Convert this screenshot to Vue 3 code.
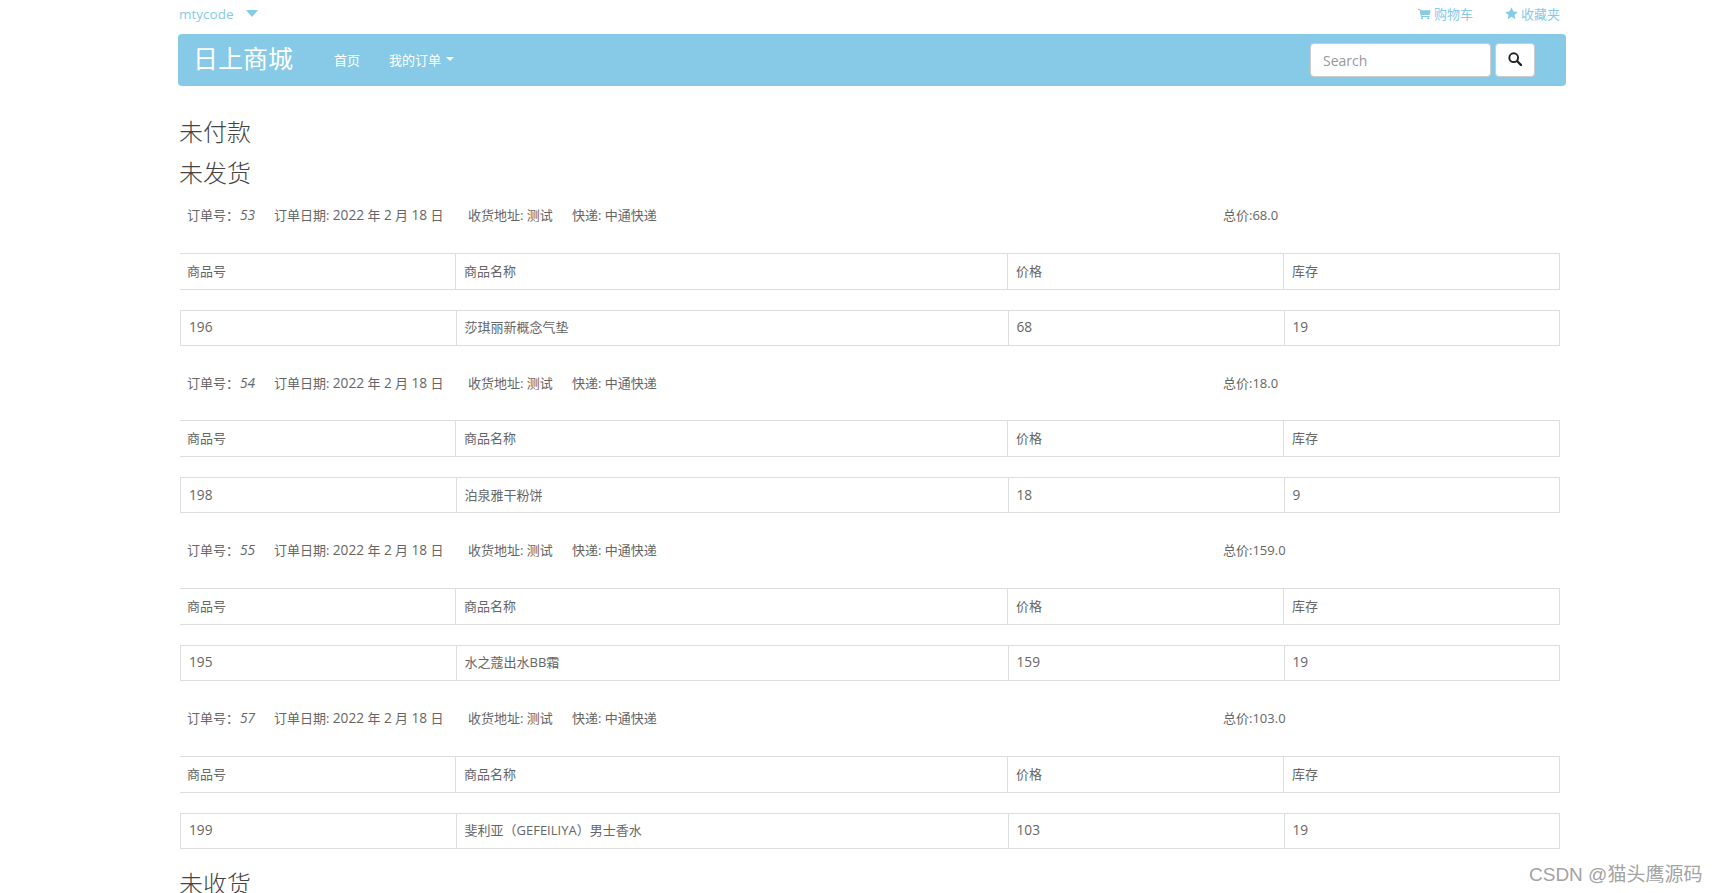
<script setup>
const orders = [
  { id: 53, total: '68.0', pid: 196, name: '莎琪丽新概念气垫', price: 68, stock: 19 },
  { id: 54, total: '18.0', pid: 198, name: '泊泉雅干粉饼', price: 18, stock: 9 },
  { id: 55, total: '159.0', pid: 195, name: '水之蔻出水BB霜', price: 159, stock: 19 },
  { id: 57, total: '103.0', pid: 199, name: '斐利亚（GEFEILIYA）男士香水', price: 103, stock: 19 },
]
</script>

<template>
  <div class="page">
    <div class="container">
      <div class="topbar">
        <a class="user">mtycode<i class="user-caret"></i></a>
        <div class="links">
          <a class="link">
            <svg class="ico cart" viewBox="0 0 14 12" aria-hidden="true">
              <path d="M0 0.6h2.4l.4 1.4H13.6l-1 5H3.9l.3 1.2H12.4v1H3.2L1.6 1.7H0z" />
              <circle cx="4.4" cy="10.7" r="1.2" />
              <circle cx="11" cy="10.7" r="1.2" />
            </svg>购物车
          </a>
          <a class="link">
            <svg class="ico star" viewBox="0 0 14 14" aria-hidden="true">
              <path d="M7 .4l2 4.4 4.8.5-3.6 3.2 1 4.7L7 10.4l-4.2 2.8 1-4.7L.2 5.3 5 4.8z" />
            </svg>收藏夹
          </a>
        </div>
      </div>

      <nav class="navbar">
        <a class="brand">日上商城</a>
        <a class="nav-item first">首页</a>
        <a class="nav-item second">我的订单<i class="nav-caret"></i></a>
        <form class="search" @submit.prevent>
          <input class="search-input" type="text" placeholder="Search" />
          <button class="search-btn" type="submit" aria-label="Search">
            <svg viewBox="0 0 16 16" width="14" height="14" aria-hidden="true">
              <circle cx="6.5" cy="6.5" r="5" fill="none" stroke="#222" stroke-width="2.2" />
              <path d="M10.3 10.3L15 15" stroke="#222" stroke-width="2.6" stroke-linecap="round" />
            </svg>
          </button>
        </form>
      </nav>

      <section class="content">
        <h3 class="heading">未付款</h3>
        <h3 class="heading">未发货</h3>

        <div class="orders">
          <div v-for="o in orders" :key="o.id" class="order">
            <div class="order-info">
              <span>订单号：<em class="num">{{ o.id }}</em></span>
              <span>订单日期: <b class="num">2022</b> 年 <b class="num">2</b> 月 <b class="num">18</b> 日</span>
              <span>收货地址: 测试</span>
              <span>快递: 中通快递</span>
              <span>总价:{{ o.total }}</span>
            </div>
            <table class="grid head">
              <tbody>
                <tr>
                  <td class="c1">商品号</td>
                  <td class="c2">商品名称</td>
                  <td class="c3">价格</td>
                  <td class="c4">库存</td>
                </tr>
              </tbody>
            </table>
            <table class="grid body">
              <tbody>
                <tr>
                  <td class="c1"><b class="num">{{ o.pid }}</b></td>
                  <td class="c2">{{ o.name }}</td>
                  <td class="c3"><b class="num">{{ o.price }}</b></td>
                  <td class="c4"><b class="num">{{ o.stock }}</b></td>
                </tr>
              </tbody>
            </table>
          </div>
        </div>

        <h3 class="heading last">未收货</h3>
      </section>
    </div>
    <div class="watermark">CSDN @猫头鹰源码</div>
  </div>
</template>

<style scoped>
.page {
  position: relative;
  height: 893px;
  overflow: hidden;
  background: #fff;
  font-family: "Open Sans", "Noto Sans CJK SC", sans-serif;
  font-size: 13px;
  color: #666;
}
.container {
  width: 1388px;
  margin-left: 178px;
}
.num {
  font-size: 13.7px;
  font-weight: 400;
  line-height: 1;
}
.topbar {
  height: 34px;
  padding: 0 6px 7px 2px;
  display: flex;
  align-items: center;
  justify-content: space-between;
  box-sizing: border-box;
  color: #87cae7;
}
.user {
  display: flex;
  align-items: center;
  font-size: 13.5px;
  margin-left: -1px;
}
.user-caret {
  width: 0;
  height: 0;
  margin-left: 12px;
  border-left: 6px solid transparent;
  border-right: 6px solid transparent;
  border-top: 7px solid #87cae7;
}
.links {
  display: flex;
  gap: 32px;
}
.link {
  display: flex;
  align-items: center;
}
.ico {
  fill: #87cae7;
  margin-right: 3px;
}
.cart {
  width: 13px;
  height: 12px;
}
.star {
  width: 13px;
  height: 13px;
}
.navbar {
  height: 52px;
  background: #87cae7;
  border-radius: 4px;
  display: flex;
  align-items: center;
  padding: 0 31px 0 15px;
  box-sizing: border-box;
  color: #fff;
}
.brand {
  font-size: 25px;
  line-height: 25px;
  width: 141px;
  padding-bottom: 4px;
  flex: none;
  box-sizing: border-box;
}
.nav-item {
  display: flex;
  align-items: center;
  flex: none;
  padding-bottom: 2px;
}
.first {
  width: 55px;
}
.nav-caret {
  width: 0;
  height: 0;
  margin-left: 5px;
  border-left: 4px solid transparent;
  border-right: 4px solid transparent;
  border-top: 4px solid #fff;
}
.search {
  margin-left: auto;
  display: flex;
  gap: 4px;
}
.search-input {
  width: 181px;
  height: 34px;
  box-sizing: border-box;
  padding: 0 12px;
  border: 1px solid #ccc;
  border-radius: 4px;
  background: #fff;
  font: 14px "Open Sans", sans-serif;
  color: #555;
  outline: none;
}
.search-input::placeholder {
  color: #999;
  opacity: 1;
}
.search-btn {
  width: 40px;
  height: 34px;
  padding: 0 0 3px;
  border: 1px solid #ccc;
  border-radius: 4px;
  background: #fff;
  display: flex;
  align-items: center;
  justify-content: center;
}
.content {
  padding: 24.5px 6px 0 2px;
}
.heading {
  margin: 0 0 0 -1px;
  height: 41px;
  line-height: 41px;
  font-size: 24px;
  font-weight: 300;
  color: #444;
}
.heading.last {
  margin-top: -6px;
}
.orders {
  padding-top: 5.5px;
}
.order-info {
  display: grid;
  grid-template-columns: 87px 194px 104px 651px auto;
  height: 34.67px;
  line-height: 34px;
  padding-left: 7px;
  margin-bottom: 20px;
}
.order-info em {
  font-style: italic;
  margin-left: 1px;
}
.grid {
  width: 1380px;
  table-layout: fixed;
  border-collapse: collapse;
  margin-bottom: 20px;
}
.grid td {
  padding: 0 7px 1px 8px;
  border: 1px solid #ddd;
  line-height: 20px;
  box-sizing: border-box;
}
.head td {
  height: 36px;
}
.head .c1 {
  border-left: 0;
  padding-left: 7px;
}
.body td {
  height: 35px;
}
.c1 {
  width: 275.5px;
}
.c2 {
  width: 552px;
}
.c3 {
  width: 276px;
}
.watermark {
  position: absolute;
  left: 1529px;
  top: 859px;
  font: 19px "Liberation Sans", "Noto Sans CJK SC", sans-serif;
  color: #a3a3a3;
  white-space: nowrap;
}
</style>
